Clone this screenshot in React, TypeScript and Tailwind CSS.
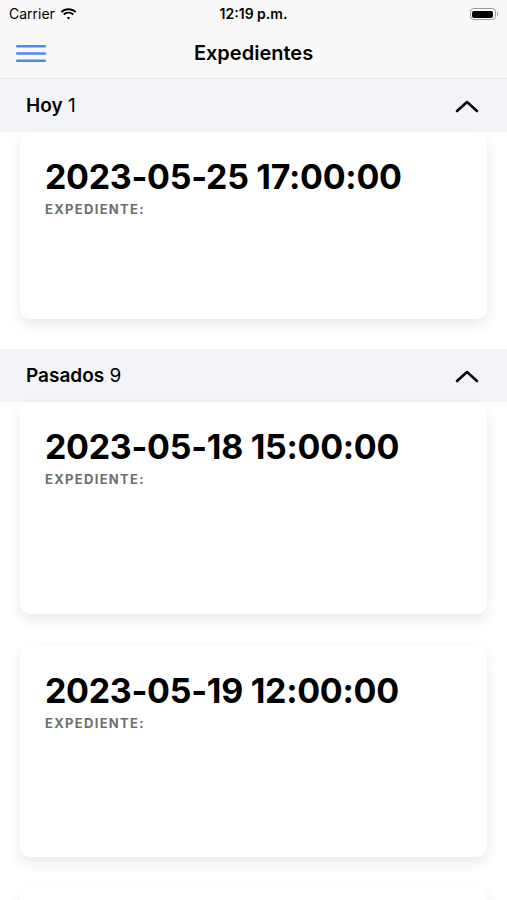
import React from "react";

const font = { fontFamily: "Inter, 'Noto Sans', sans-serif" };

function Card({ date, h }: { date?: string; h: string }) {
  return (
    <div className={`mx-[20px] rounded-[10px] bg-white shadow-[0_6px_14px_rgba(0,0,0,0.09)] ${h} px-[25px] pt-[25px]`}>
      {date ? (
        <>
          <div className="text-[34px] font-bold leading-[40px] tracking-[-0.3px] text-black">{date}</div>
          <div className="mt-[5px] text-[13px] font-bold leading-[14px] tracking-[1.3px] text-[#6e6e6e]">EXPEDIENTE:</div>
        </>
      ) : null}
    </div>
  );
}

function SectionHeader({ title, count }: { title: string; count: string }) {
  return (
    <div className="flex h-[53px] items-center justify-between bg-[#f2f4f7] pl-[26px] pr-[28px]">
      <div className="text-[19px] leading-none text-black">
        <span className="font-semibold">{title}</span> <span>{count}</span>
      </div>
      <svg width="24" height="14" viewBox="0 0 24 14" fill="none">
        <path d="M2 12 L12 3 L22 12" stroke="#000" strokeWidth="2.6" strokeLinecap="round" strokeLinejoin="round" />
      </svg>
    </div>
  );
}

export default function App() {
  return (
    <div className="h-[900px] w-[507px] overflow-hidden bg-white" style={font}>
      <div className="bg-[#f8f8f8] border-b border-[#e3e3e3]">
        <div className="relative flex h-[28px] items-center px-[9px]">
          <div className="flex items-center gap-[5px]">
            <span className="text-[14px] leading-none text-black">Carrier</span>
            <svg width="17" height="12" viewBox="0 0 17 12">
              <path d="M8.5 2.2c2.5 0 4.8 1 6.5 2.6l1.3-1.4C14.3 1.4 11.5.2 8.5.2S2.7 1.4.7 3.4L2 4.8c1.7-1.6 4-2.6 6.5-2.6z" fill="#000" />
              <path d="M8.5 5.6c1.6 0 3 .6 4.1 1.6l1.3-1.4C12.5 4.5 10.6 3.7 8.5 3.7S4.5 4.5 3.1 5.8l1.3 1.4c1.1-1 2.5-1.6 4.1-1.6z" fill="#000" />
              <path d="M8.5 8.9c.7 0 1.3.2 1.8.7L8.5 11.6 6.7 9.6c.5-.5 1.1-.7 1.8-.7z" fill="#000" />
            </svg>
          </div>
          <div className="absolute left-0 right-0 text-center text-[14px] font-semibold leading-none text-black">12:19 p.m.</div>
          <div className="ml-auto flex items-center">
            <div className="flex h-[12px] w-[26px] items-center rounded-[3.5px] border border-[#9a9a9a] p-[1.5px]">
              <div className="h-full w-full rounded-[2px] bg-black" />
            </div>
            <div className="ml-[1px] h-[4px] w-[1.5px] rounded-r bg-[#9a9a9a]" />
          </div>
        </div>
        <div className="relative flex h-[50px] items-center px-[16px]">
          <svg width="30" height="17" viewBox="0 0 30 17">
            <rect x="0" y="0" width="30" height="2.4" rx="1.2" fill="#4a89f3" />
            <rect x="0" y="7.3" width="30" height="2.4" rx="1.2" fill="#4a89f3" />
            <rect x="0" y="14.6" width="30" height="2.4" rx="1.2" fill="#4a89f3" />
          </svg>
          <div className="absolute left-0 right-0 text-center text-[20px] font-semibold leading-none text-black">Expedientes</div>
        </div>
      </div>

      <SectionHeader title="Hoy" count="1" />
      <Card date="2023-05-25 17:00:00" h="h-[187px]" />
      <div className="h-[30px]" />
      <SectionHeader title="Pasados" count="9" />
      <Card date="2023-05-18 15:00:00" h="h-[212px]" />
      <div className="h-[32px]" />
      <Card date="2023-05-19 12:00:00" h="h-[211px]" />
      <div className="h-[30px]" />
      <Card h="h-[200px]" />
    </div>
  );
}
